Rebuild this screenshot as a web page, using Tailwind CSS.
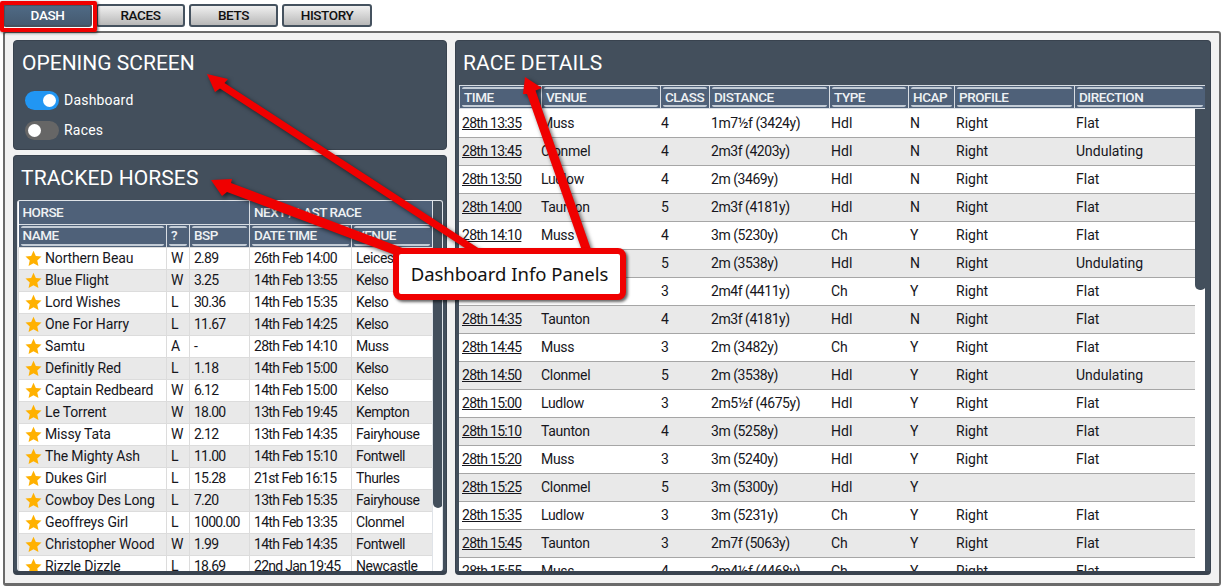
<!DOCTYPE html>
<html>
<head>
<meta charset="utf-8">
<script src="https://cdn.jsdelivr.net/npm/@tailwindcss/browser@4"></script>
</head>
<body class="bg-white font-['Roboto',sans-serif] overflow-hidden">
<div class="relative w-[1222px] h-[586px] flex flex-col overflow-hidden">
  <nav class="h-[31px] pl-[3px] pt-[4px] flex gap-[4px] items-start text-[13.5px] font-medium tracking-[-0.4px]">
    <div class="relative">
      <button class="w-[89px] h-[23px] rounded-[3px] border-2 border-[#45525f] bg-gradient-to-b from-[#4f6a85] to-[#455a70] text-white flex items-center justify-center">DASH</button>
      <div class="absolute -left-[3px] -top-[3px] w-[97px] h-[31px] border-[4px] border-[#f00000] rounded-[2px] shadow-[1px_1px_3px_rgba(0,0,0,0.6)]"></div>
    </div>
    <button class="w-[89px] h-[23px] rounded-[3px] border-2 border-[#45525f] bg-gradient-to-b from-[#f0f0f0] to-[#b8b8b8] text-[#111] flex items-center justify-center">RACES</button>
    <button class="w-[89px] h-[23px] rounded-[3px] border-2 border-[#45525f] bg-gradient-to-b from-[#f0f0f0] to-[#b8b8b8] text-[#111] flex items-center justify-center">BETS</button>
    <button class="w-[90px] h-[23px] rounded-[3px] border-2 border-[#45525f] bg-gradient-to-b from-[#f0f0f0] to-[#b8b8b8] text-[#111] flex items-center justify-center">HISTORY</button>
  </nav>

  <main class="h-[555px] ml-[3px] mr-[1px] border-x-2 border-t-2 border-b-[3px] border-[#6b6b6b] rounded-[3px] bg-[#f2f2f2] pl-[8px] pr-[8px] pt-[7px] pb-[8px] flex gap-[8px]">
    <div class="w-[434px] flex flex-col gap-[5px]">
      <section class="h-[110px] shrink-0 bg-[#434f5c] rounded-[4px] border border-[#39434f] pl-[8px] pt-[8px]">
        <h2 class="text-white text-[21px] leading-[28px] font-normal">OPENING SCREEN</h2>
        <div class="mt-[14px] ml-[3px] flex items-center gap-[5px] h-[19px]">
          <span class="w-[34px] h-[19px] rounded-full bg-[#2196f3] flex items-center justify-end pr-[3px]"><span class="w-[13px] h-[13px] rounded-full bg-white"></span></span>
          <span class="text-white text-[14px] tracking-[0.2px]">Dashboard</span>
        </div>
        <div class="mt-[11px] ml-[3px] flex items-center gap-[5px] h-[19px]">
          <span class="w-[34px] h-[19px] rounded-full bg-[#666666] flex items-center justify-start pl-[3px]"><span class="w-[13px] h-[13px] rounded-full bg-white"></span></span>
          <span class="text-white text-[14px] tracking-[0.2px]">Races</span>
        </div>
      </section>

      <section class="flex-1 min-h-0 flex flex-col bg-[#434f5c] rounded-[4px] border border-[#39434f] border-b-[4px] pt-[8px] pl-[3px] pr-[3px] pb-0">
        <h2 class="text-white text-[21px] leading-[28px] tracking-[0.1px] font-normal pl-[4px]">TRACKED HORSES</h2>
        <div class="mt-[8px] flex-1 min-h-0 flex overflow-hidden bg-white rounded-[3px] border-x border-t border-[#dfe3e8]">
          <div class="w-[414px] shrink-0 overflow-hidden">
            <table class="table-fixed w-[414px] border-collapse text-[14px] text-[#16161c]">
              <colgroup><col class="w-[148px]"><col class="w-[23px]"><col class="w-[60px]"><col class="w-[102px]"><col class="w-[81px]"></colgroup>
              <thead class="bg-[#4f6179] text-[#eef1f4] text-[13.5px] font-medium text-left tracking-[-0.5px]">
                <tr class="h-[23px]">
                  <th colspan="3" class="font-medium pl-[4px] border-r border-[#d8dde3]">HORSE</th>
                  <th colspan="2" class="font-medium pl-[4px]">NEXT / LAST RACE</th>
                </tr>
                <tr class="h-[23px] border-t border-[#d8dde3] [&_th]:font-medium [&_th]:border-r [&_th]:border-[#d8dde3] [&_th]:px-[2px] [&_div]:h-[20px] [&_div]:border-y-2 [&_div]:border-[#c3ccd6] [&_div]:rounded-[2px] [&_div]:pl-[2px] [&_div]:flex [&_div]:items-center">
                  <th><div>NAME</div></th><th><div>?</div></th><th><div>BSP</div></th><th><div>DATE TIME</div></th><th><div>VENUE</div></th>
                </tr>
              </thead>
              <tbody class="[&_tr]:h-[22px] [&_tr:nth-child(even)]:bg-[#e9e9e9] [&_td]:border [&_td]:border-[#dcdcdc] [&_td]:pl-[4px] [&_td]:py-0 [&_td]:leading-[21px] [&_td]:whitespace-nowrap [&_td:nth-child(1)]:pl-[6px] [&_td:nth-child(1)]:tracking-[-0.15px] [&_td:nth-child(3)]:tracking-[-0.75px] [&_td:nth-child(4)]:tracking-[-0.7px] [&_td:nth-child(5)]:tracking-[-0.45px]">
                <tr><td><span class="flex items-center gap-[3px]"><svg viewBox="0 0 24 24" class="w-[17px] h-[17px] fill-[#ffb100]"><path d="M12 1l3.3 7.4 8 .9-6 5.4 1.7 7.9-7-4-7 4 1.7-7.9-6-5.4 8-.9z"/></svg>Northern Beau</span></td><td>W</td><td>2.89</td><td>26th Feb 14:00</td><td>Leicester</td></tr>
                <tr><td><span class="flex items-center gap-[3px]"><svg viewBox="0 0 24 24" class="w-[17px] h-[17px] fill-[#ffb100]"><path d="M12 1l3.3 7.4 8 .9-6 5.4 1.7 7.9-7-4-7 4 1.7-7.9-6-5.4 8-.9z"/></svg>Blue Flight</span></td><td>W</td><td>3.25</td><td>14th Feb 13:55</td><td>Kelso</td></tr>
                <tr><td><span class="flex items-center gap-[3px]"><svg viewBox="0 0 24 24" class="w-[17px] h-[17px] fill-[#ffb100]"><path d="M12 1l3.3 7.4 8 .9-6 5.4 1.7 7.9-7-4-7 4 1.7-7.9-6-5.4 8-.9z"/></svg>Lord Wishes</span></td><td>L</td><td>30.36</td><td>14th Feb 15:35</td><td>Kelso</td></tr>
                <tr><td><span class="flex items-center gap-[3px]"><svg viewBox="0 0 24 24" class="w-[17px] h-[17px] fill-[#ffb100]"><path d="M12 1l3.3 7.4 8 .9-6 5.4 1.7 7.9-7-4-7 4 1.7-7.9-6-5.4 8-.9z"/></svg>One For Harry</span></td><td>L</td><td>11.67</td><td>14th Feb 14:25</td><td>Kelso</td></tr>
                <tr><td><span class="flex items-center gap-[3px]"><svg viewBox="0 0 24 24" class="w-[17px] h-[17px] fill-[#ffb100]"><path d="M12 1l3.3 7.4 8 .9-6 5.4 1.7 7.9-7-4-7 4 1.7-7.9-6-5.4 8-.9z"/></svg>Samtu</span></td><td>A</td><td>-</td><td>28th Feb 14:10</td><td>Muss</td></tr>
                <tr><td><span class="flex items-center gap-[3px]"><svg viewBox="0 0 24 24" class="w-[17px] h-[17px] fill-[#ffb100]"><path d="M12 1l3.3 7.4 8 .9-6 5.4 1.7 7.9-7-4-7 4 1.7-7.9-6-5.4 8-.9z"/></svg>Definitly Red</span></td><td>L</td><td>1.18</td><td>14th Feb 15:00</td><td>Kelso</td></tr>
                <tr><td><span class="flex items-center gap-[3px]"><svg viewBox="0 0 24 24" class="w-[17px] h-[17px] fill-[#ffb100]"><path d="M12 1l3.3 7.4 8 .9-6 5.4 1.7 7.9-7-4-7 4 1.7-7.9-6-5.4 8-.9z"/></svg>Captain Redbeard</span></td><td>W</td><td>6.12</td><td>14th Feb 15:00</td><td>Kelso</td></tr>
                <tr><td><span class="flex items-center gap-[3px]"><svg viewBox="0 0 24 24" class="w-[17px] h-[17px] fill-[#ffb100]"><path d="M12 1l3.3 7.4 8 .9-6 5.4 1.7 7.9-7-4-7 4 1.7-7.9-6-5.4 8-.9z"/></svg>Le Torrent</span></td><td>W</td><td>18.00</td><td>13th Feb 19:45</td><td>Kempton</td></tr>
                <tr><td><span class="flex items-center gap-[3px]"><svg viewBox="0 0 24 24" class="w-[17px] h-[17px] fill-[#ffb100]"><path d="M12 1l3.3 7.4 8 .9-6 5.4 1.7 7.9-7-4-7 4 1.7-7.9-6-5.4 8-.9z"/></svg>Missy Tata</span></td><td>W</td><td>2.12</td><td>13th Feb 14:35</td><td>Fairyhouse</td></tr>
                <tr><td><span class="flex items-center gap-[3px]"><svg viewBox="0 0 24 24" class="w-[17px] h-[17px] fill-[#ffb100]"><path d="M12 1l3.3 7.4 8 .9-6 5.4 1.7 7.9-7-4-7 4 1.7-7.9-6-5.4 8-.9z"/></svg>The Mighty Ash</span></td><td>L</td><td>11.00</td><td>14th Feb 15:10</td><td>Fontwell</td></tr>
                <tr><td><span class="flex items-center gap-[3px]"><svg viewBox="0 0 24 24" class="w-[17px] h-[17px] fill-[#ffb100]"><path d="M12 1l3.3 7.4 8 .9-6 5.4 1.7 7.9-7-4-7 4 1.7-7.9-6-5.4 8-.9z"/></svg>Dukes Girl</span></td><td>L</td><td>15.28</td><td>21st Feb 16:15</td><td>Thurles</td></tr>
                <tr><td><span class="flex items-center gap-[3px]"><svg viewBox="0 0 24 24" class="w-[17px] h-[17px] fill-[#ffb100]"><path d="M12 1l3.3 7.4 8 .9-6 5.4 1.7 7.9-7-4-7 4 1.7-7.9-6-5.4 8-.9z"/></svg>Cowboy Des Long</span></td><td>L</td><td>7.20</td><td>13th Feb 15:35</td><td>Fairyhouse</td></tr>
                <tr><td><span class="flex items-center gap-[3px]"><svg viewBox="0 0 24 24" class="w-[17px] h-[17px] fill-[#ffb100]"><path d="M12 1l3.3 7.4 8 .9-6 5.4 1.7 7.9-7-4-7 4 1.7-7.9-6-5.4 8-.9z"/></svg>Geoffreys Girl</span></td><td>L</td><td>1000.00</td><td>14th Feb 13:35</td><td>Clonmel</td></tr>
                <tr><td><span class="flex items-center gap-[3px]"><svg viewBox="0 0 24 24" class="w-[17px] h-[17px] fill-[#ffb100]"><path d="M12 1l3.3 7.4 8 .9-6 5.4 1.7 7.9-7-4-7 4 1.7-7.9-6-5.4 8-.9z"/></svg>Christopher Wood</span></td><td>W</td><td>1.99</td><td>14th Feb 14:35</td><td>Fontwell</td></tr>
                <tr><td><span class="flex items-center gap-[3px]"><svg viewBox="0 0 24 24" class="w-[17px] h-[17px] fill-[#ffb100]"><path d="M12 1l3.3 7.4 8 .9-6 5.4 1.7 7.9-7-4-7 4 1.7-7.9-6-5.4 8-.9z"/></svg>Rizzle Dizzle</span></td><td>L</td><td>18.69</td><td>22nd Jan 19:45</td><td>Newcastle</td></tr>
              </tbody>
            </table>
          </div>
          <div class="w-[11px] shrink-0 bg-white border-l border-[#dfe3e8]"><div class="h-[307px] bg-[#434f5c] rounded-b-[5px]"></div></div>
        </div>
      </section>
    </div>

    <section class="w-[756px] shrink-0 flex flex-col bg-[#434f5c] rounded-[4px] border border-[#39434f] border-b-[4px] pt-[8px] pl-[3px] pr-[5px]">
      <h2 class="text-white text-[21px] leading-[28px] tracking-[0.1px] font-normal pl-[4px]">RACE DETAILS</h2>
      <div class="mt-[8px] flex-1 min-h-0 overflow-hidden">
        <table class="table-fixed w-[746px] border-collapse bg-[#4f6179] text-[#eef1f4] text-[13.5px] font-medium text-left tracking-[-0.45px]">
          <colgroup><col class="w-[82px]"><col class="w-[119px]"><col class="w-[49px]"><col class="w-[120px]"><col class="w-[79px]"><col class="w-[46px]"><col class="w-[120px]"><col class="w-[131px]"></colgroup>
          <thead>
            <tr class="h-[23px] border border-[#d8dde3] [&_th]:font-medium [&_th]:border-r [&_th]:border-[#d8dde3] [&_th]:px-[2px] [&_div]:h-[20px] [&_div]:border-y-2 [&_div]:border-[#c3ccd6] [&_div]:rounded-[2px] [&_div]:pl-[2px] [&_div]:flex [&_div]:items-center">
              <th><div>TIME</div></th><th><div>VENUE</div></th><th><div>CLASS</div></th><th><div>DISTANCE</div></th><th><div>TYPE</div></th><th><div>HCAP</div></th><th><div>PROFILE</div></th><th><div>DIRECTION</div></th>
            </tr>
          </thead>
        </table>
        <div class="flex">
          <table class="table-fixed w-[736px] shrink-0 border-collapse bg-white text-[14px] text-[#16161c]">
            <colgroup><col class="w-[82px]"><col class="w-[119px]"><col class="w-[49px]"><col class="w-[120px]"><col class="w-[79px]"><col class="w-[46px]"><col class="w-[120px]"><col class="w-[121px]"></colgroup>
            <tbody class="[&_tr]:h-[28px] [&_tr]:border-b [&_tr]:border-[#a6a6a6] [&_tr:nth-child(even)]:bg-[#e9e9e9] [&_td]:pl-[2px] [&_td]:whitespace-nowrap [&_a]:underline [&_tr:first-child_td]:pt-[2px] [&_td:nth-child(1)]:pl-[3px] [&_td:nth-child(1)]:tracking-[-0.7px] [&_td:nth-child(2)]:pl-0 [&_td:nth-child(2)]:tracking-[-0.3px] [&_td:nth-child(3)]:pl-[1px] [&_td:nth-child(4)]:tracking-[-0.45px]">
              <tr><td><a>28th 13:35</a></td><td>Muss</td><td>4</td><td>1m7½f (3424y)</td><td>Hdl</td><td>N</td><td>Right</td><td>Flat</td></tr>
              <tr><td><a>28th 13:45</a></td><td>Clonmel</td><td>4</td><td>2m3f (4203y)</td><td>Hdl</td><td>N</td><td>Right</td><td>Undulating</td></tr>
              <tr><td><a>28th 13:50</a></td><td>Ludlow</td><td>4</td><td>2m (3469y)</td><td>Hdl</td><td>N</td><td>Right</td><td>Flat</td></tr>
              <tr><td><a>28th 14:00</a></td><td>Taunton</td><td>5</td><td>2m3f (4181y)</td><td>Hdl</td><td>N</td><td>Right</td><td>Flat</td></tr>
              <tr><td><a>28th 14:10</a></td><td>Muss</td><td>4</td><td>3m (5230y)</td><td>Ch</td><td>Y</td><td>Right</td><td>Flat</td></tr>
              <tr><td><a>28th 14:20</a></td><td>Clonmel</td><td>5</td><td>2m (3538y)</td><td>Hdl</td><td>N</td><td>Right</td><td>Undulating</td></tr>
              <tr><td><a>28th 14:25</a></td><td>Ludlow</td><td>3</td><td>2m4f (4411y)</td><td>Ch</td><td>Y</td><td>Right</td><td>Flat</td></tr>
              <tr><td><a>28th 14:35</a></td><td>Taunton</td><td>4</td><td>2m3f (4181y)</td><td>Hdl</td><td>N</td><td>Right</td><td>Flat</td></tr>
              <tr><td><a>28th 14:45</a></td><td>Muss</td><td>3</td><td>2m (3482y)</td><td>Ch</td><td>Y</td><td>Right</td><td>Flat</td></tr>
              <tr><td><a>28th 14:50</a></td><td>Clonmel</td><td>5</td><td>2m (3538y)</td><td>Hdl</td><td>Y</td><td>Right</td><td>Undulating</td></tr>
              <tr><td><a>28th 15:00</a></td><td>Ludlow</td><td>3</td><td>2m5½f (4675y)</td><td>Hdl</td><td>Y</td><td>Right</td><td>Flat</td></tr>
              <tr><td><a>28th 15:10</a></td><td>Taunton</td><td>4</td><td>3m (5258y)</td><td>Hdl</td><td>Y</td><td>Right</td><td>Flat</td></tr>
              <tr><td><a>28th 15:20</a></td><td>Muss</td><td>3</td><td>3m (5240y)</td><td>Hdl</td><td>Y</td><td>Right</td><td>Flat</td></tr>
              <tr><td><a>28th 15:25</a></td><td>Clonmel</td><td>5</td><td>3m (5300y)</td><td>Hdl</td><td>Y</td><td></td><td></td></tr>
              <tr><td><a>28th 15:35</a></td><td>Ludlow</td><td>3</td><td>3m (5231y)</td><td>Ch</td><td>Y</td><td>Right</td><td>Flat</td></tr>
              <tr><td><a>28th 15:45</a></td><td>Taunton</td><td>3</td><td>2m7f (5063y)</td><td>Ch</td><td>Y</td><td>Right</td><td>Flat</td></tr>
              <tr><td><a>28th 15:55</a></td><td>Muss</td><td>4</td><td>2m4½f (4468y)</td><td>Ch</td><td>Y</td><td>Right</td><td>Flat</td></tr>
            </tbody>
          </table>
          <div class="w-[11px] shrink-0 bg-white"><div class="h-[181px] bg-[#434f5c] rounded-b-[5px]"></div></div>
        </div>
      </div>
    </section>
  </main>

  <svg class="absolute left-0 top-0 w-[1222px] h-[586px] pointer-events-none drop-shadow-[2px_2px_2px_rgba(0,0,0,0.6)]" viewBox="0 0 1222 586">
    <g fill="#f00000" stroke="none">
      <polygon points="207,74 228,79 224.5,83 492,257 488,263 220,88.5 215,92"/>
      <polygon points="211,180 232,179 231,183 442,263 438,271 227,192 222,196"/>
      <polygon points="525,77 542,88 535.5,90.5 594,258 586,262 527,94 523,94"/>
    </g>
  </svg>
  <div class="absolute left-[393px] top-[248px] w-[233px] h-[52px] rounded-[8px] border-[6px] border-[#f00000] bg-white shadow-[2px_2px_3px_rgba(0,0,0,0.6)] flex items-center justify-center pb-[1px] font-['Noto_Sans',sans-serif] text-[18.5px] text-[#111]">Dashboard Info Panels</div>
</div>
</body>
</html>
